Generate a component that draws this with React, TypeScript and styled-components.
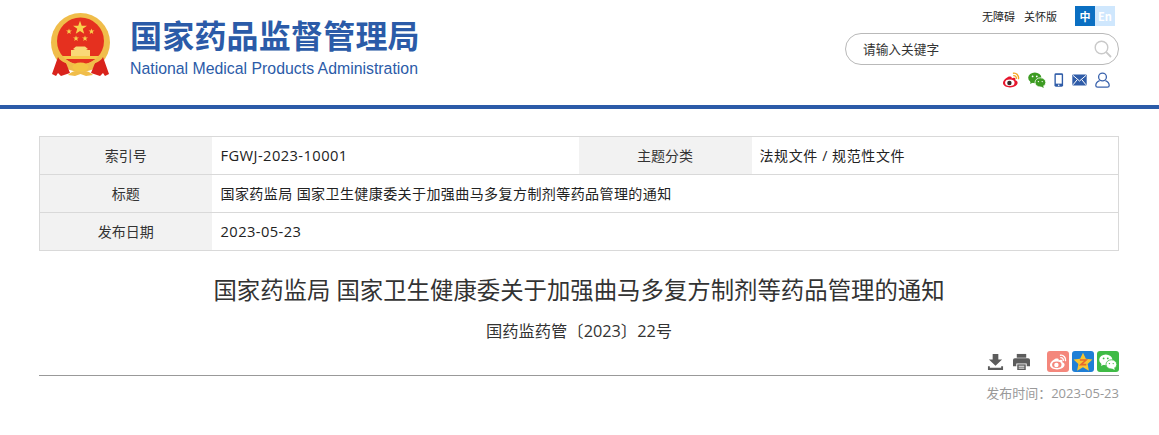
import styled, { createGlobalStyle } from "styled-components";

const GlobalStyle = createGlobalStyle`
    html, body {
        margin: 0;
        padding: 0;
        background: #ffffff;
        font-family: "Open Sans", "Noto Sans CJK SC", sans-serif;
    }
`;

const STAR = "M0 -5 L1.2 -1.6 L4.8 -1.5 L1.9 0.6 L2.9 4 L0 2 L-2.9 4 L-1.9 0.6 L-4.8 -1.5 L-1.2 -1.6 Z";

function Emblem() {
    return (
        <svg width="60" height="64" viewBox="0 0 60 64">
            <circle cx="30.5" cy="29.5" r="29.5" fill="#f0bd4a" />
            <circle cx="30.5" cy="28" r="23.5" fill="#e5301f" />
            <g fill="#f8d24e">
                <path d={STAR} transform="translate(30 15) scale(1.45)" />
                <path d={STAR} transform="translate(19 18.5) scale(0.62)" />
                <path d={STAR} transform="translate(26 25.5) scale(0.62)" />
                <path d={STAR} transform="translate(35 25.5) scale(0.62)" />
                <path d={STAR} transform="translate(41.5 18.5) scale(0.62)" />
            </g>
            <path d="M23 36 L26 33.5 L35 33.5 L38 36 L36 37 L40 37 L40 43 L21 43 L21 37 L25 37 Z" fill="#f9d877" />
            <path d="M12 43 H49 V46 H12 Z" fill="#f6c84a" />
            <path d="M8 44 Q10 48 16 50 L20 60 L11 63 L8 60 L6 63 L2 61 Z" fill="#d9231c" />
            <path d="M53 44 Q51 48 45 50 L41 60 L50 63 L53 60 L55 63 L59 61 Z" fill="#d9231c" />
            <path d="M9 42 Q18 53 30.5 53 Q43 53 52 42" fill="none" stroke="#f0bd4a" strokeWidth="3.4" />
            <ellipse cx="30.5" cy="54" rx="8" ry="4.5" fill="#f4c544" />
            <path d="M18 62 Q24 56 30.5 59 Q37 56 43 62 L36 63 L30.5 61 L25 63 Z" fill="#f0bd4a" />
        </svg>
    );
}

function WeiboGlyph({ size = 18, eye = "#3a2a2a", body = "#e6162d", arc = "#f5a623" }: { size?: number; eye?: string; body?: string; arc?: string }) {
    return (
        <svg width={size} height={size} viewBox="0 0 18 18">
            <path d="M7.5 5.2C4.4 6.3 1 9.3 1 12c0 2.6 3.4 4.4 7 4.4 4.4 0 7.6-2.5 7.6-4.7 0-1.5-1.3-2.2-2.3-2.5.4-1.2.1-2.2-1-2.4-1 -.2-2 .3-2.6.7.3-1.6-.6-2.6-2.2-1.8z" fill={body} />
            <ellipse cx="7.8" cy="11.8" rx="4.7" ry="3.3" fill={body === "#ffffff" ? "#f4877c" : "#ffffff"} />
            <circle cx="7.4" cy="12" r="2.2" fill={eye} />
            <path d="M11.5 2.2a4.6 4.6 0 0 1 5 5.4M11.8 4.6a2.4 2.4 0 0 1 2.5 2.7" fill="none" stroke={arc} strokeWidth="1.4" strokeLinecap="round" />
        </svg>
    );
}

function WechatGlyph({ size = 18, big = "#3d9b22", small = "#3d9b22", dot = "#ffffff" }: { size?: number; big?: string; small?: string; dot?: string }) {
    return (
        <svg width={size} height={size} viewBox="0 0 18 18">
            <ellipse cx="6.8" cy="6.8" rx="6.6" ry="5.4" fill={big} />
            <path d="M2.6 9.8 L2.2 13 L5.4 11.2 Z" fill={big} />
            <ellipse cx="12.4" cy="11.4" rx="5.4" ry="4.6" fill={small} stroke={dot} strokeWidth="0.8" />
            <path d="M15 14.6 L15.8 17 L12.8 15.6 Z" fill={small} />
            <circle cx="4.6" cy="5.4" r="0.9" fill={dot} />
            <circle cx="8.8" cy="5.4" r="0.9" fill={dot} />
            <circle cx="10.4" cy="10.6" r="0.7" fill={dot} />
            <circle cx="14.2" cy="10.6" r="0.7" fill={dot} />
        </svg>
    );
}

export default function App() {
    return (
        <Page>
            <GlobalStyle />
            <Header>
                <Brand>
                    <Emblem />
                    <BrandText>
                        <BrandName>国家药品监督管理局</BrandName>
                        <BrandEnglish>National Medical Products Administration</BrandEnglish>
                    </BrandText>
                </Brand>
                <Tools>
                    <TopLinks>
                        <TopLink>无障碍</TopLink>
                        <TopLink>关怀版</TopLink>
                        <LangSwitch>
                            <LangItem $active>中</LangItem>
                            <LangItem>En</LangItem>
                        </LangSwitch>
                    </TopLinks>
                    <SearchBox>
                        <SearchText>请输入关键字</SearchText>
                        <svg width="18" height="18" viewBox="0 0 18 18" fill="none" stroke="#c9c9c9">
                            <circle cx="7.5" cy="7.5" r="6.3" strokeWidth="1.4" />
                            <path d="M12.2 12.2 L17 17" strokeWidth="1.8" />
                        </svg>
                    </SearchBox>
                    <SocialRow>
                        <WeiboGlyph />
                        <WechatGlyph />
                        <svg width="10" height="16" viewBox="0 0 11 16">
                            <rect x="0.5" y="0.5" width="9.5" height="15" rx="1.6" fill="#2f5ca8" />
                            <rect x="2" y="2.4" width="6.5" height="9.6" fill="#ffffff" />
                            <circle cx="5.2" cy="13.8" r="0.9" fill="#ffffff" />
                        </svg>
                        <svg width="15" height="12" viewBox="0 0 15 12">
                            <rect x="0.3" y="0.5" width="14.4" height="11" rx="1" fill="#2f5ca8" />
                            <path d="M1 1.4 L7.5 7 L14 1.4 M1 10.8 L5.3 5.6 M14 10.8 L9.7 5.6" fill="none" stroke="#ffffff" strokeWidth="1" />
                        </svg>
                        <svg width="15" height="16" viewBox="0 0 15 16" fill="none" stroke="#3a63ad" strokeWidth="1.3">
                            <circle cx="7.5" cy="5" r="3.9" />
                            <path d="M4.6 8.6 C2 9.6 0.8 11.4 0.8 13.4 C0.8 14.6 1.6 15.2 2.6 15.2 L12.4 15.2 C13.4 15.2 14.2 14.6 14.2 13.4 C14.2 11.4 13 9.6 10.4 8.6" />
                        </svg>
                    </SocialRow>
                </Tools>
            </Header>
            <Main>
                <MetaTable>
                    <colgroup>
                        <col width="172" />
                        <col width="367" />
                        <col width="173" />
                        <col />
                    </colgroup>
                    <tbody>
                        <tr>
                            <MetaLabel>索引号</MetaLabel>
                            <MetaValue $latin>FGWJ-2023-10001</MetaValue>
                            <MetaLabel>主题分类</MetaLabel>
                            <MetaValue $tight>法规文件 / 规范性文件</MetaValue>
                        </tr>
                        <tr>
                            <MetaLabel>标题</MetaLabel>
                            <MetaValue colSpan={3}>国家药监局 国家卫生健康委关于加强曲马多复方制剂等药品管理的通知</MetaValue>
                        </tr>
                        <tr>
                            <MetaLabel>发布日期</MetaLabel>
                            <MetaValue $latin colSpan={3}>2023-05-23</MetaValue>
                        </tr>
                    </tbody>
                </MetaTable>
                <Title>国家药监局 国家卫生健康委关于加强曲马多复方制剂等药品管理的通知</Title>
                <DocNumber>国药监药管〔2023〕22号</DocNumber>
                <ActionBar>
                    <ActionIcon $gap={9}>
                        <svg width="17" height="17" viewBox="0 0 18 18" fill="#5c5c5c">
                            <path d="M6 1 H12 V7 H16 L9 13.5 L2 7 H6 Z" />
                            <path d="M1 14 H3 V15.6 H15 V14 H17 V18 H1 Z" />
                        </svg>
                    </ActionIcon>
                    <ActionIcon $gap={17}>
                        <svg width="17" height="17" viewBox="0 0 18 18">
                            <path d="M4 1 H14 V5 H4 Z" fill="#5c5c5c" />
                            <path d="M2 5.5 H16 A2 2 0 0 1 18 7.5 V14 H14.5 V11 H3.5 V14 H0 V7.5 A2 2 0 0 1 2 5.5 Z" fill="#5c5c5c" />
                            <path d="M4.5 12 H13.5 V18 H4.5 Z" fill="#5c5c5c" />
                            <path d="M6 14 H12 M6 16 H12" stroke="#ffffff" strokeWidth="1" />
                        </svg>
                    </ActionIcon>
                    <ShareButton $color="#f4877c">
                        <WeiboGlyph size={18} eye="#ffffff" body="#ffffff" arc="#ffffff" />
                    </ShareButton>
                    <ShareButton $color="#1f7fd6">
                        <svg width="20" height="20" viewBox="0 0 19 19">
                            <path d="M9.5 0.6 L12.2 6.3 L18.5 7.1 L13.9 11.4 L15.1 17.7 L9.5 14.6 L3.9 17.7 L5.1 11.4 L0.5 7.1 L6.8 6.3 Z" fill="#f7c531" />
                            <path d="M6.5 7.6 H12.4 L7.4 12 H12.6" fill="none" stroke="#e8682b" strokeWidth="1.5" />
                        </svg>
                    </ShareButton>
                    <ShareButton $color="#3fbb46">
                        <WechatGlyph size={18} big="#ffffff" small="#ffffff" dot="#3fbb46" />
                    </ShareButton>
                </ActionBar>
                <PublishTime>发布时间：2023-05-23</PublishTime>
            </Main>
        </Page>
    );
}

const Page = styled.div`
    width: 1159px;
    height: 435px;
    overflow: hidden;
    background: #ffffff;
`;

const Header = styled.header`
    box-sizing: border-box;
    height: 109px;
    padding: 6px 40px 0 50px;
    border-bottom: 4px solid #2b5ba8;
    display: flex;
    justify-content: space-between;
`;

const Brand = styled.div`
    display: flex;
    gap: 19px;
    padding-top: 7px;
`;

const BrandText = styled.div`
    display: flex;
    flex-direction: column;
    padding: 2px 0 0 1px;
`;

const BrandName = styled.div`
    height: 38px;
    font-family: "Noto Sans CJK SC", sans-serif;
    font-size: 32px;
    line-height: 38px;
    font-weight: 700;
    letter-spacing: 0.2px;
    color: #2b5ba8;
    white-space: nowrap;
`;

const BrandEnglish = styled.div`
    margin-top: 7px;
    font-family: "Liberation Sans", sans-serif;
    font-size: 15.85px;
    line-height: 18px;
    color: #2b5ba8;
    white-space: nowrap;
`;

const Tools = styled.div`
    width: 274px;
    display: flex;
    flex-direction: column;
    align-items: stretch;
`;

const TopLinks = styled.div`
    height: 20px;
    padding-right: 4px;
    display: flex;
    justify-content: flex-end;
    align-items: center;
`;

const TopLink = styled.span`
    margin-right: 9px;
    font-size: 11px;
    color: #222222;
`;

const LangSwitch = styled.div`
    margin-left: 9px;
    display: flex;
`;

const LangItem = styled.span<{ $active?: boolean }>`
    width: 20px;
    height: 20px;
    font-family: "Noto Sans CJK SC", sans-serif;
    font-size: 11px;
    line-height: 20px;
    font-weight: 700;
    text-align: center;
    color: #ffffff;
    background: ${({ $active }) => ($active ? "#0a6fc2" : "#cfe7fd")};
`;

const SearchBox = styled.div`
    box-sizing: border-box;
    height: 32px;
    margin-top: 7px;
    padding: 0 6px 0 17px;
    border: 1px solid #b9b9b9;
    border-radius: 16px;
    display: flex;
    align-items: center;
    justify-content: space-between;
`;

const SearchText = styled.span`
    margin-top: -2px;
    font-size: 12.7px;
    color: #333333;
`;

const SocialRow = styled.div`
    margin-top: 6px;
    padding-right: 9px;
    display: flex;
    justify-content: flex-end;
    align-items: center;
    gap: 8px;
`;

const Main = styled.main`
    box-sizing: border-box;
    padding: 27px 40px 0 39px;
`;

const MetaTable = styled.table`
    width: 1080px;
    border: 1px solid #d9d9d9;
    border-collapse: collapse;
    table-layout: fixed;
`;

const MetaLabel = styled.td`
    height: 35px;
    padding: 0 0 2px;
    border-top: 1px solid #d9d9d9;
    border-bottom: 1px solid #d9d9d9;
    background: #f2f2f2;
    font-size: 14px;
    text-align: center;
    color: #333333;
`;

const MetaValue = styled.td<{ $tight?: boolean; $latin?: boolean }>`
    height: 35px;
    padding: 0 0 ${({ $latin }) => ($latin ? "1px" : "2px")} ${({ $tight }) => ($tight ? "8px" : "9px")};
    border-top: 1px solid #d9d9d9;
    border-bottom: 1px solid #d9d9d9;
    font-size: ${({ $latin }) => ($latin ? "14.7px" : "14px")};
    letter-spacing: ${({ $tight }) => ($tight ? "0.6px" : "0.42px")};
    color: #222222;
`;

const Title = styled.h1`
    margin: 22px 0 0;
    font-size: 23.4px;
    line-height: 34px;
    font-weight: 400;
    text-align: center;
    color: #333333;
`;

const DocNumber = styled.div`
    margin-top: 13px;
    font-size: 16.3px;
    line-height: 22px;
    text-align: center;
    color: #333333;
`;

const ActionBar = styled.div`
    box-sizing: border-box;
    height: 26px;
    margin-top: 8px;
    padding-top: 1px;
    border-bottom: 1px solid #999999;
    display: flex;
    justify-content: flex-end;
    align-items: flex-start;
    gap: 3px;
`;

const ActionIcon = styled.span<{ $gap: number }>`
    display: flex;
    margin: 2px ${({ $gap }) => $gap - 3}px 0 0;
`;

const ShareButton = styled.span<{ $color: string }>`
    width: 22px;
    height: 21px;
    border-radius: 3px;
    background: ${({ $color }) => $color};
    display: flex;
    align-items: center;
    justify-content: center;
`;

const PublishTime = styled.div`
    margin-top: 8px;
    font-size: 13px;
    line-height: 18px;
    text-align: right;
    color: #999999;
`;
